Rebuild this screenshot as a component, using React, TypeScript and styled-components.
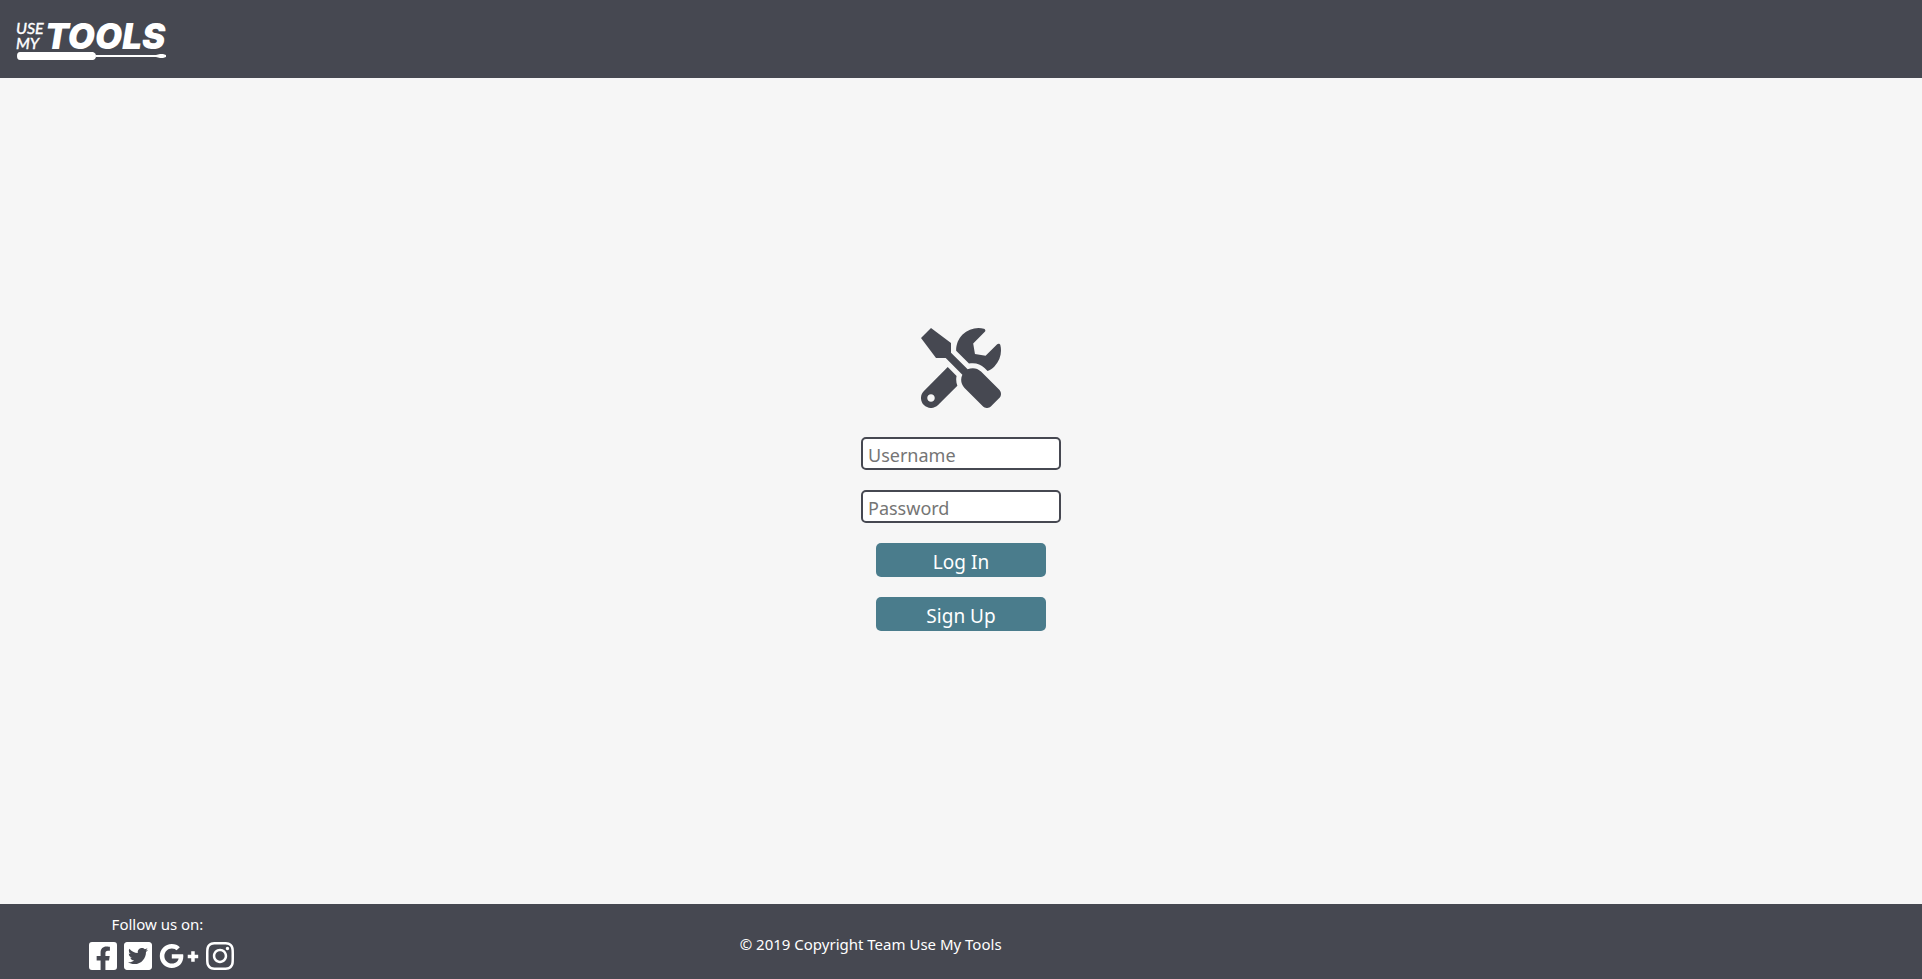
import React from "react";
import styled, { createGlobalStyle } from "styled-components";
import { FaTools, FaFacebookSquare, FaTwitterSquare, FaGooglePlusG, FaInstagram } from "react-icons/fa";

const colors = {
  slate: "#464851",
  teal: "#4a7c8c",
  paper: "#f6f6f6",
};

const GlobalStyle = createGlobalStyle`
  * { box-sizing: border-box; }
  body {
    margin: 0;
    background: ${colors.paper};
    font-family: "Noto Sans", "Open Sans", sans-serif;
  }
`;

const Page = styled.div`
  min-height: 100vh;
  display: flex;
  flex-direction: column;
`;

const Header = styled.header`
  display: flex;
  padding: 20px 16px;
  background: ${colors.slate};
`;

const HomeLink = styled.a`
  display: block;
  height: 38px;
`;

const LogoArt = styled.svg`
  display: block;
  width: 152px;
  height: 42px;
  overflow: visible;
  fill: #fff;
  font-style: italic;
`;

const LogoSmall = styled.text`
  font-family: Lato, sans-serif;
  font-size: 16px;
  stroke: #fff;
  stroke-width: 0.4;
`;

const LogoLarge = styled.text`
  font-family: Inter, sans-serif;
  font-size: 35px;
  font-weight: 900;
`;

const Main = styled.main`
  flex: 1;
  display: flex;
  align-items: center;
  justify-content: center;
  padding-bottom: 24px;
`;

const Form = styled.form`
  width: 200px;
  display: flex;
  flex-direction: column;
  align-items: center;
  gap: 20px;
`;

const ToolsIcon = styled(FaTools)`
  width: 80px;
  height: 80px;
  margin-bottom: 9px;
  color: ${colors.slate};
`;

const Field = styled.input`
  width: 100%;
  height: 33px;
  padding: 4px 5px 0;
  border: 2px solid ${colors.slate};
  border-radius: 5px;
  background: #fff;
  font-family: inherit;
  font-size: 18px;

  &::placeholder {
    color: #757575;
  }
`;

const Button = styled.button`
  width: 170px;
  height: 34px;
  padding: 4px 0 0;
  border: 0;
  border-radius: 5px;
  background: ${colors.teal};
  color: #fff;
  font-family: inherit;
  font-size: 19px;
  line-height: 30px;
  cursor: pointer;
`;

const Footer = styled.footer`
  display: flex;
  align-items: center;
  gap: calc(26vw + 6px);
  padding: 8px 0 7px 81px;
  background: ${colors.slate};
  color: #fff;
  font-size: 15px;
  line-height: 24px;
`;

const Social = styled.section`
  display: flex;
  flex-direction: column;
  align-items: center;
  gap: 4px;
`;

const SocialLinks = styled.nav`
  display: flex;
  gap: 7px;
  padding-left: 8px;
`;

const SocialLink = styled.a<{ $width: number }>`
  display: flex;
  color: #fff;

  svg {
    width: ${({ $width }) => $width}px;
    height: 32px;
  }
`;

const Copyright = styled.p`
  margin: 4px 0 0;
`;

const networks = [
  { name: "Facebook", Icon: FaFacebookSquare, width: 28 },
  { name: "Twitter", Icon: FaTwitterSquare, width: 28 },
  { name: "Google Plus", Icon: FaGooglePlusG, width: 40 },
  { name: "Instagram", Icon: FaInstagram, width: 28 },
];

function Logo() {
  return (
    <LogoArt viewBox="0 0 152 42" role="img" aria-label="Use My Tools">
      <LogoSmall>
        <tspan x="0" y="14">USE</tspan>
        <tspan x="0" y="29">MY</tspan>
      </LogoSmall>
      <LogoLarge x="29" y="29">TOOLS</LogoLarge>
      <path d="M4 32H77Q80 33 80 36T77 40H4Q1 40 1 36T4 32Z" />
      <path d="M80 35H140L144 34H147L150 35V37L147 38H144L140 37H80Z" />
    </LogoArt>
  );
}

export default function App() {
  return (
    <Page>
      <GlobalStyle />
      <Header>
        <HomeLink href="#">
          <Logo />
        </HomeLink>
      </Header>
      <Main>
        <Form>
          <ToolsIcon aria-hidden="true" />
          <Field type="text" aria-label="Username" placeholder="Username" />
          <Field type="password" aria-label="Password" placeholder="Password" />
          <Button type="button">Log In</Button>
          <Button type="button">Sign Up</Button>
        </Form>
      </Main>
      <Footer>
        <Social>
          <span>Follow us on:</span>
          <SocialLinks aria-label="Social media">
            {networks.map(({ name, Icon, width }) => (
              <SocialLink key={name} href="#" aria-label={name} $width={width}>
                <Icon />
              </SocialLink>
            ))}
          </SocialLinks>
        </Social>
        <Copyright>© 2019 Copyright Team Use My Tools</Copyright>
      </Footer>
    </Page>
  );
}
